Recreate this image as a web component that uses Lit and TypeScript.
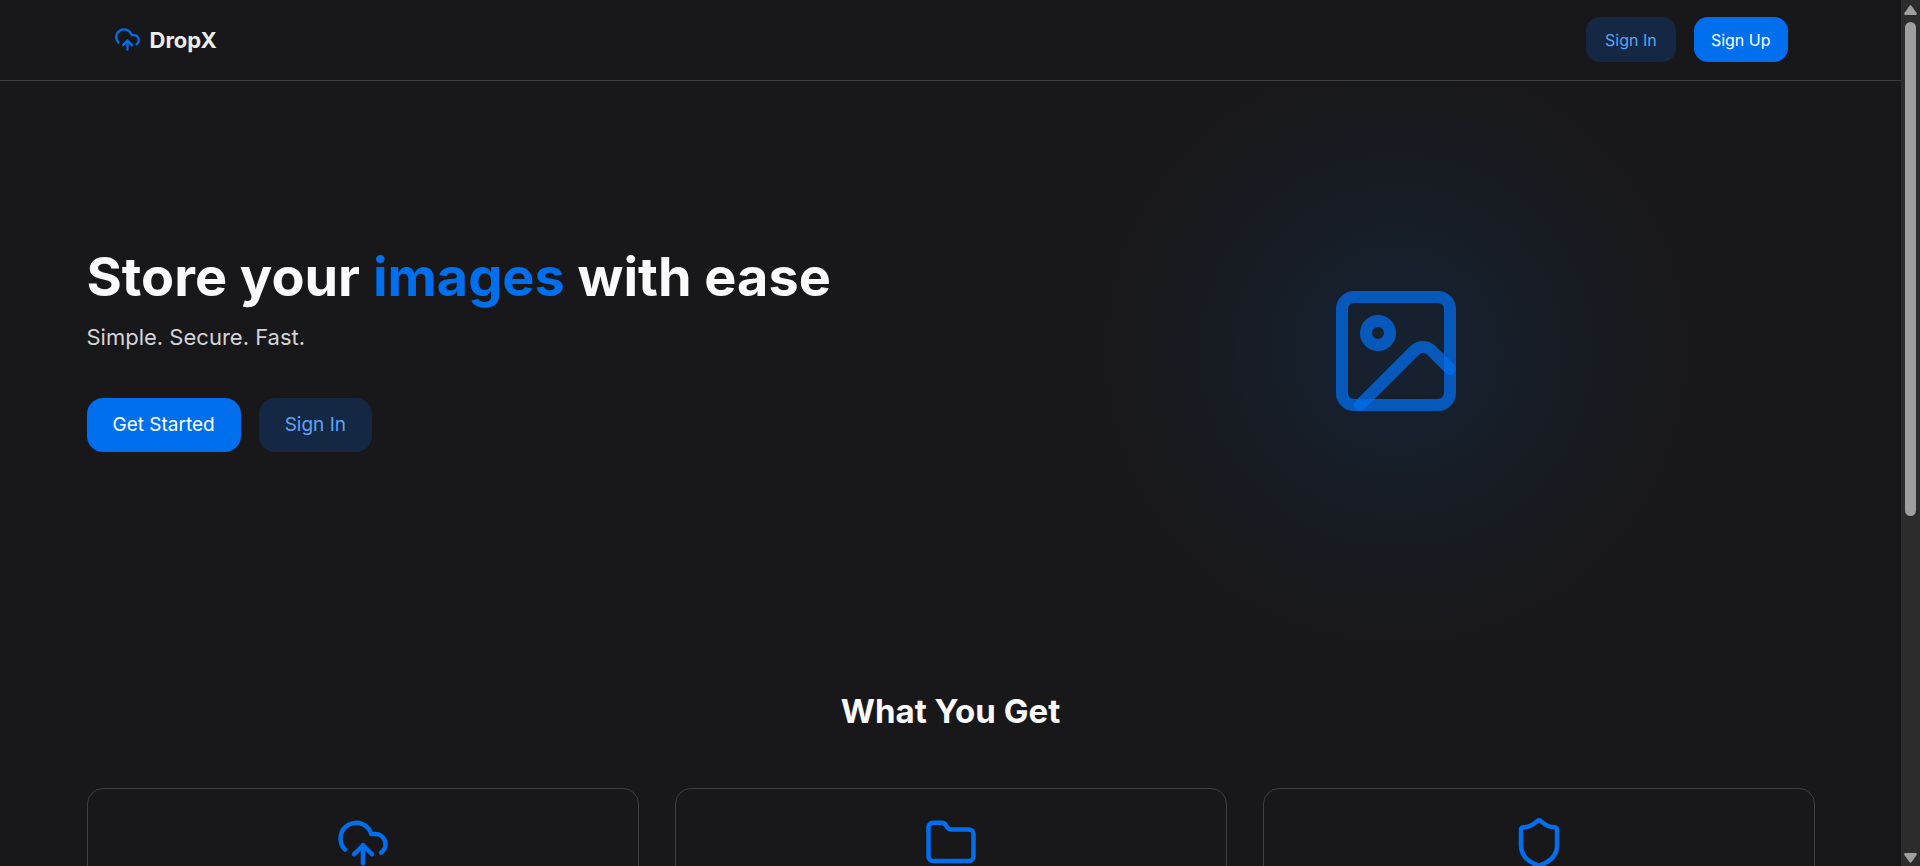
import { LitElement, html, css, svg } from "lit";
import { customElement } from "lit/decorators.js";

const cloudUpload = svg`<path d="M12 13v8"/><path d="M4 14.899A7 7 0 1 1 15.71 8h1.79a4.5 4.5 0 0 1 2.5 8.242"/><path d="m8 17 4-4 4 4"/>`;
const folder = svg`<path d="M20 20a2 2 0 0 0 2-2V8a2 2 0 0 0-2-2h-7.9a2 2 0 0 1-1.69-.9L9.6 3.9A2 2 0 0 0 7.93 3H4a2 2 0 0 0-2 2v13a2 2 0 0 0 2 2Z"/>`;
const shield = svg`<path d="M20 13c0 5-3.5 7.5-7.66 8.95a1 1 0 0 1-.67-.01C7.5 20.5 4 18 4 13V6a1 1 0 0 1 1-1c2 0 4.5-1.2 6.24-2.72a1.17 1.17 0 0 1 1.52 0C14.51 3.81 17 5 19 5a1 1 0 0 1 1 1z"/>`;
const image = svg`<rect width="18" height="18" x="3" y="3" rx="2" ry="2"/><circle cx="9" cy="9" r="2"/><path d="m21 15-3.086-3.086a2 2 0 0 0-2.828 0L6 21"/>`;

const icon = (shape: unknown, cls: string) => html`
  <svg class="icon ${cls}" viewBox="0 0 24 24" aria-hidden="true">${shape}</svg>
`;

@customElement("app-root")
export class AppRoot extends LitElement {
  static styles = css`
    :host {
      display: flex;
      height: 100vh;
      overflow: hidden;
      background: #18181a;
      color: #fafafa;
      font-family: Inter, "Open Sans", sans-serif;
    }
    * {
      box-sizing: border-box;
    }
    h1,
    h2,
    p {
      margin: 0;
    }
    .page {
      flex: 1;
      min-width: 0;
      overflow: hidden;
    }
    .icon {
      display: block;
      fill: none;
      stroke: #006fee;
      stroke-width: 2;
      stroke-linecap: round;
      stroke-linejoin: round;
    }
    .header {
      position: relative;
      z-index: 1;
      background: #18181a;
      border-bottom: 1px solid #3f3f46;
    }
    .bar {
      display: flex;
      align-items: center;
      justify-content: space-between;
      height: 80px;
      max-width: 1728px;
      margin: 0 auto;
      padding: 0 27px 1px;
    }
    .brand {
      display: flex;
      align-items: center;
      gap: 9px;
      color: #ecedee;
      font-size: 22px;
      line-height: 32px;
      font-weight: 700;
      text-decoration: none;
    }
    .brand-icon {
      width: 27px;
      height: 27px;
    }
    .actions {
      display: flex;
      gap: 18px;
    }
    .button {
      border: 0;
      border-radius: 14px;
      padding: 0 17px;
      min-width: 90px;
      height: 45px;
      font-family: inherit;
      font-size: 16px;
      line-height: 22px;
      cursor: pointer;
    }
    .large {
      height: 54px;
      padding: 0 26px;
      border-radius: 16px;
      font-size: 19px;
      line-height: 28px;
    }
    .solid {
      background: #006fee;
      color: #ffffff;
    }
    .flat {
      background: #142844;
      color: #5ea4f8;
    }
    .wrap {
      max-width: 1728px;
      margin: 0 auto;
    }
    .hero {
      display: grid;
      grid-template-columns: 1fr 1fr;
      gap: 54px;
      align-items: center;
      min-height: 540px;
    }
    .title {
      font-size: 54px;
      line-height: 54px;
      font-weight: 700;
      white-space: nowrap;
    }
    .accent {
      color: #006fee;
    }
    .tagline {
      margin-top: 17px;
      color: #d4d4d8;
      font-size: 22px;
      line-height: 32px;
    }
    .cta {
      display: flex;
      gap: 18px;
      margin-top: 45px;
    }
    .art {
      display: grid;
      place-items: center;
      align-self: stretch;
      position: relative;
    }
    .glow {
      position: absolute;
      inset: -28px 0;
      background: radial-gradient(
        circle closest-side,
        rgba(0, 111, 238, 0.1) 0,
        rgba(0, 111, 238, 0.085) 25%,
        rgba(0, 111, 238, 0.055) 50%,
        rgba(0, 111, 238, 0.025) 75%,
        rgba(0, 111, 238, 0) 100%
      );
    }
    .art-icon {
      position: relative;
      width: 144px;
      height: 144px;
      stroke: rgba(0, 111, 238, 0.73);
    }
    .features {
      padding-top: 71px;
    }
    .heading {
      font-size: 33px;
      line-height: 38px;
      font-weight: 700;
      text-align: center;
    }
    .cards {
      display: grid;
      grid-template-columns: repeat(3, 1fr);
      gap: 36px;
      margin-top: 58px;
    }
    .card {
      display: grid;
      justify-items: center;
      padding: 27px;
      border: 1px solid #3f3f42;
      border-radius: 16px;
    }
    .card-icon {
      width: 54px;
      height: 54px;
    }
    .scrollbar {
      display: flex;
      flex-direction: column;
      align-items: center;
      width: 19px;
      padding: 5px 0 3px;
      background: #2c2c2c;
    }
    .arrow {
      display: block;
      width: 13px;
      height: 10px;
      fill: #9f9f9f;
    }
    .track {
      flex: 1;
      width: 11px;
      margin: 7px 0;
    }
    .thumb {
      height: 60%;
      border-radius: 6px;
      background: #9f9f9f;
    }
  `;

  render() {
    return html`
      <div class="page">
        <header class="header">
          <div class="bar">
            <a class="brand" href="#">${icon(cloudUpload, "brand-icon")}<span>DropX</span></a>
            <nav class="actions">
              <button class="button flat">Sign In</button>
              <button class="button solid">Sign Up</button>
            </nav>
          </div>
        </header>
        <main class="wrap">
          <section class="hero">
            <div>
              <h1 class="title">Store your <span class="accent">images</span> with ease</h1>
              <p class="tagline">Simple. Secure. Fast.</p>
              <div class="cta">
                <button class="button large solid">Get Started</button>
                <button class="button large flat">Sign In</button>
              </div>
            </div>
            <div class="art">
              <div class="glow"></div>
              ${icon(image, "art-icon")}
            </div>
          </section>
          <section class="features">
            <h2 class="heading">What You Get</h2>
            <div class="cards">
              ${[cloudUpload, folder, shield].map(
                (shape) => html`<article class="card">${icon(shape, "card-icon")}</article>`
              )}
            </div>
          </section>
        </main>
      </div>
      <div class="scrollbar" aria-hidden="true">
        <svg class="arrow" viewBox="0 0 13 10"><path d="M5.4 1Q6.5-.6 7.6 1L12.6 8Q13.4 10 11.5 10H1.5Q-.4 10 .4 8Z"/></svg>
        <div class="track"><div class="thumb"></div></div>
        <svg class="arrow" viewBox="0 0 13 10"><path d="M5.4 9Q6.5 10.6 7.6 9L12.6 2Q13.4 0 11.5 0H1.5Q-.4 0 .4 2Z"/></svg>
      </div>
    `;
  }
}
